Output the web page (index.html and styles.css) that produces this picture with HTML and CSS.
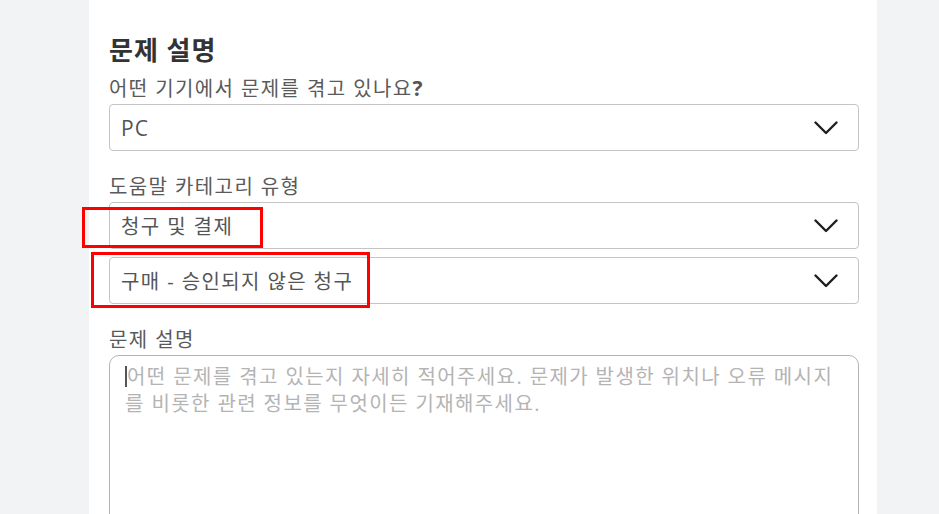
FILE: index.html
```html
<!DOCTYPE html>
<html lang="ko">
<head>
<meta charset="utf-8">
<title>문제 설명</title>
<link rel="stylesheet" href="styles.css">
</head>
<body>
<div class="page">
  <main class="panel">
    <h2 class="title">문제 설명</h2>
    <label class="label first">어떤 기기에서 문제를 겪고 있나요<b>?</b></label>
    <div class="select">
      <span class="latin">PC</span>
      <svg class="chev" viewBox="0 0 24 14" width="24" height="14"><polyline points="1.5,1.5 12,12 22.5,1.5"/></svg>
    </div>
    <label class="label second-label">도움말 카테고리 유형</label>
    <div class="select">
      <span>청구 및 결제</span>
      <svg class="chev" viewBox="0 0 24 14" width="24" height="14"><polyline points="1.5,1.5 12,12 22.5,1.5"/></svg>
    </div>
    <div class="select second">
      <span>구매 - 승인되지 않은 청구</span>
      <svg class="chev" viewBox="0 0 24 14" width="24" height="14"><polyline points="1.5,1.5 12,12 22.5,1.5"/></svg>
    </div>
    <label class="label third-label">문제 설명</label>
    <div class="textarea"><span class="caret"></span><span class="ph">어떤 문제를 겪고 있는지 자세히 적어주세요. 문제가 발생한 위치나 오류 메시지를 비롯한 관련 정보를 무엇이든 기재해주세요.</span></div>
  </main>
  <div class="mark mark-a"></div>
  <div class="mark mark-b"></div>
</div>
</body>
</html>
```
FILE: styles.css
```css
html, body {
  margin: 0;
  padding: 0;
  height: 100%;
  overflow: hidden;
  background: #f2f3f5;
  font-family: "Open Sans", "Noto Sans CJK KR", sans-serif;
}
.page {
  position: relative;
  height: 100%;
}
.panel {
  margin-left: 89px;
  width: 750px;
  padding: 0 18px 0 20px;
  background: #fff;
  min-height: 100%;
  display: flex;
  flex-direction: column;
  box-sizing: content-box;
}
.title {
  margin: 34px 0 0;
  font-size: 26px;
  line-height: 32px;
  font-weight: 700;
  letter-spacing: 1px;
  color: #333;
}
.label {
  display: block;
  height: 28px;
  margin-top: 21px;
  font-size: 20px;
  line-height: 28px;
  letter-spacing: 1.4px;
  color: #5a5a5a;
}
.label.first { margin-top: 9px; }
.label.second-label { margin-top: 22px; }
.label.third-label { margin-top: 22px; }
.label b { font-weight: 700; color: #555; font-size: 21px; line-height: 1; }
.select {
  margin-top: 1px;
  height: 47px;
  box-sizing: border-box;
  border: 1px solid #c4c4c4;
  border-radius: 4px;
  display: flex;
  align-items: center;
  justify-content: space-between;
  padding: 0 20px 0 11px;
  font-size: 20px;
  letter-spacing: 1.4px;
  color: #555;
}
.select .latin { letter-spacing: 1px; font-size: 21px; }
.select.second { margin-top: 8px; }
.chev polyline {
  fill: none;
  stroke: #1e1e1e;
  stroke-width: 2.4;
  stroke-linecap: round;
  stroke-linejoin: round;
}
.textarea {
  margin-top: 1px;
  height: 200px;
  box-sizing: border-box;
  border: 1px solid #b4b4b4;
  border-radius: 10px;
  padding: 7px 20px 0 15px;
  font-size: 20px;
  line-height: 27px;
  letter-spacing: 1.4px;
  color: #b4b4b4;
}
.caret {
  display: inline-block;
  width: 0;
  height: 21px;
  border-left: 2px solid #555;
  vertical-align: -3px;
}
.mark {
  position: absolute;
  border: 3px solid #ff0000;
  box-sizing: border-box;
}
.mark-a { left: 82px; top: 207px; width: 181px; height: 41px; }
.mark-b { left: 91px; top: 252px; width: 279px; height: 56px; }
```
